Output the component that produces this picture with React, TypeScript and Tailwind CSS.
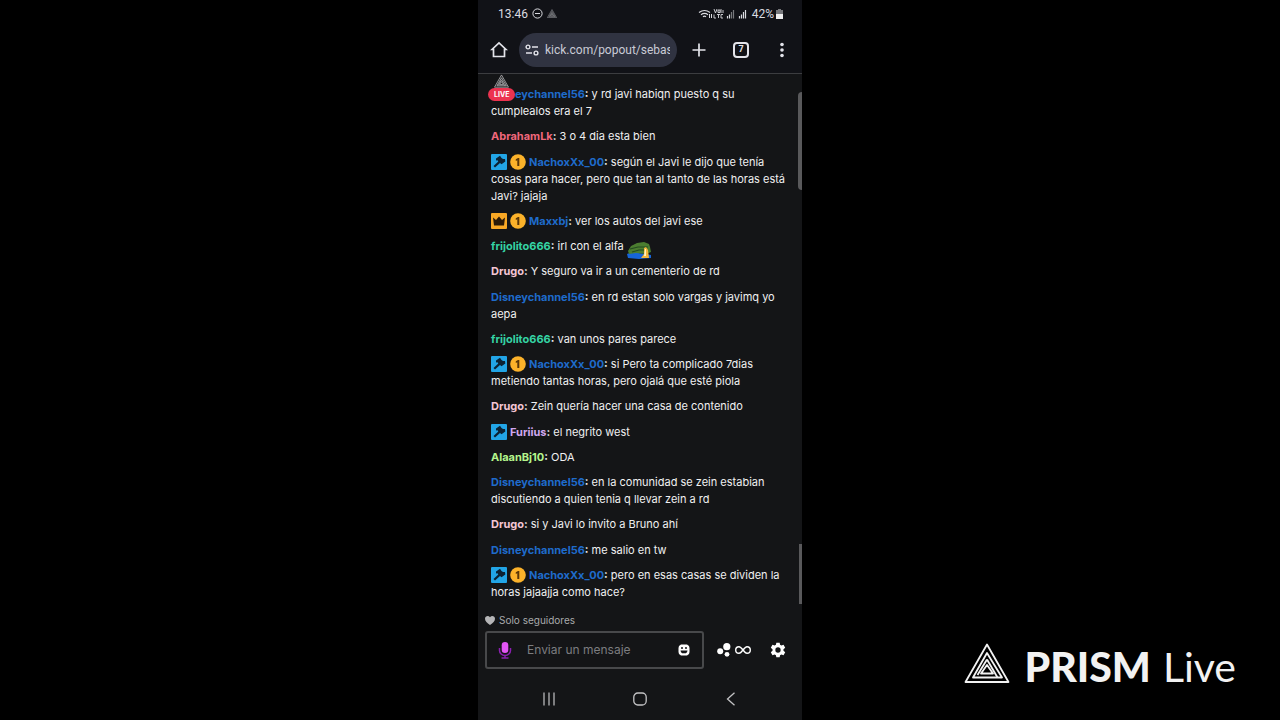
import type { ReactNode } from "react";

type Badge = "moderator" | "first" | "crown";

const colors = {
    blue: "text-[#1f6bcb]",
    coral: "text-[#f0687c]",
    teal: "text-[#35d3a4]",
    pink: "text-[#f5c6d4]",
    lilac: "text-[#d0a8f0]",
    lime: "text-[#b5f58c]",
};

const messages: { id: number; user: string; color: string; badges?: Badge[]; text: string; emote?: boolean }[] = [
    { id: 0, user: "Disneychannel56", color: colors.blue, text: "y rd javi habiqn puesto q su cumplealos era el 7" },
    { id: 1, user: "AbrahamLk", color: colors.coral, text: "3 o 4 dia esta bien" },
    { id: 2, user: "NachoxXx_00", color: colors.blue, badges: ["moderator", "first"], text: "según el Javi le dijo que tenía cosas para hacer, pero que tan al tanto de las horas está Javi? jajaja" },
    { id: 3, user: "Maxxbj", color: colors.blue, badges: ["crown", "first"], text: "ver los autos del javi ese" },
    { id: 4, user: "frijolito666", color: colors.teal, text: "irl con el alfa", emote: true },
    { id: 5, user: "Drugo", color: colors.pink, text: "Y seguro va ir a un cementerio de rd" },
    { id: 6, user: "Disneychannel56", color: colors.blue, text: "en rd estan solo vargas y javimq yo aepa" },
    { id: 7, user: "frijolito666", color: colors.teal, text: "van unos pares parece" },
    { id: 8, user: "NachoxXx_00", color: colors.blue, badges: ["moderator", "first"], text: "si Pero ta complicado 7dias metiendo tantas horas, pero ojalá que esté piola" },
    { id: 9, user: "Drugo", color: colors.pink, text: "Zein quería hacer una casa de contenido" },
    { id: 10, user: "Furiius", color: colors.lilac, badges: ["moderator"], text: "el negrito west" },
    { id: 11, user: "AlaanBj10", color: colors.lime, text: "ODA" },
    { id: 12, user: "Disneychannel56", color: colors.blue, text: "en la comunidad se zein estabian discutiendo a quien tenia q llevar zein a rd" },
    { id: 13, user: "Drugo", color: colors.pink, text: "si y Javi lo invito a Bruno ahí" },
    { id: 14, user: "Disneychannel56", color: colors.blue, text: "me salio en tw" },
    { id: 15, user: "NachoxXx_00", color: colors.blue, badges: ["moderator", "first"], text: "pero en esas casas se dividen la horas jajaajja como hace?" },
];

const PrismMark = ({ className, weight = 1.8 }: { className: string; weight?: number }) => (
    <svg viewBox="0 0 46 42" fill="none" stroke="currentColor" strokeWidth={weight} strokeLinejoin="round" className={className}>
        <path d="M23 2.500 44.500 40H1.500Z" />
        <path d="M23 11 38 35.500H9Z" />
        <path d="M23 17.500 33.500 35.500" />
        <path d="M23 17.500 13.500 33" />
        <path d="M23 23 29 31.500H17Z" />
    </svg>
);

const ChatBadge = ({ kind }: { kind: Badge }) => (
    <svg viewBox="0 0 16 16" className="-mt-0.5 mr-[3px] inline-block size-4 align-middle" aria-hidden="true">
        {kind === "moderator" && (
            <>
                <rect width="16" height="16" rx="1" fill="#22a5e6" />
                <path d="M5 4.500 9 1.800 10.500 4 12 5 14 5 14.300 7.500 10.500 10.300 9 9 4 13.500 2.500 12 7.300 7.500 6.500 6.300 5 6.500Z" fill="#0c2233" />
            </>
        )}
        {kind === "first" && (
            <>
                <circle cx="8" cy="8" r="7.800" fill="#fcb22a" />
                <path d="M8 4h1.300v8H7.300V6.300L5.800 7V5.300Z" fill="#5a3608" />
            </>
        )}
        {kind === "crown" && (
            <>
                <rect width="16" height="16" rx="1" fill="#f9a825" />
                <path d="M2 4.500 5 7 8 3.500 11 7 14 4.500 13 12.500H3Z" fill="#2b1a08" />
            </>
        )}
    </svg>
);

const CrocEmote = () => (
    <svg viewBox="0 0 25 20" className="-mt-0.5 -mb-2 inline-block h-5 w-[25px] align-middle" aria-hidden="true">
        <path d="M0 14 5 12 18 14 24 15V18L12 19 1 18Z" fill="#1765d8" />
        <path d="M1 11 4 6 10 3 17 2 22 4 23 7 24 12 19 14 9 13 2 14Z" fill="#4b7d30" />
        <path d="M3 9 11 7 21 7M5 12 12 10 20 10" stroke="#244a20" strokeWidth="1.200" fill="none" />
        <path d="M17 8 19 7 21 10 22 18H14L17 14Z" fill="#f4b63d" />
        <path d="M18 9 19 9 19 16 17 16Z" fill="#fff3bd" />
    </svg>
);

const StatusBar = () => (
    <div className="flex h-[27px] items-center justify-between pr-[19px] pl-5 font-[Roboto,sans-serif] text-[12px] text-[#dadbe0]">
        <div className="flex items-center gap-1">
            <span>13:46</span>
            <svg viewBox="0 0 11 11" fill="none" stroke="currentColor" className="size-[11px]">
                <circle cx="5.500" cy="5.500" r="4.600" />
                <path d="M3 5.500h5" />
            </svg>
            <PrismMark className="h-[9px] w-[10px] text-[#a5a6aa]" weight={2.4} />
        </div>
        <div className="flex items-center gap-[2px]">
            <svg viewBox="0 0 52 12" className="h-3 w-[52px]" fill="none" stroke="currentColor">
                <path d="M1 4.500Q6.500 .5 12 4.500M3 6.700Q6.500 4 10 6.700M5 8.700Q6.500 7.500 8 8.700" strokeWidth="1.200" />
                <path d="M11.500 6v4M13.500 6v4" />
                <path d="M16 1l1.500 4L19 1M20 2h2v2.500h-2ZM23 1v4M25 2v3M16 6.500V10h2M19 6.500h3M20.500 6.500V10M25 6.500h-2V10h2" strokeWidth=".9" />
                <path d="M29.500 8v2.500M31.500 6.500v4" strokeWidth="1.200" />
                <path d="M33.500 4v6.500M35.500 2v8.500" stroke="#77787c" strokeWidth="1.200" />
                <path d="M41.500 8v2.500M43.500 6.500v4M45.500 4v6.500" strokeWidth="1.200" />
                <path d="M47.500 2v8.500" strokeWidth="1.200" />
            </svg>
            <span>42%</span>
            <svg viewBox="0 0 7 10" className="h-[10px] w-[7px]">
                <path d="M2 0h3v1h2v9H0V1h2Z" fill="#77787c" />
                <path d="M0 5h7v5H0Z" fill="#eeeeef" />
            </svg>
        </div>
    </div>
);

const IconButton = ({ label, className = "", children }: { label: string; className?: string; children: ReactNode }) => (
    <button type="button" aria-label={label} className={`flex shrink-0 items-center justify-center ${className}`}>
        {children}
    </button>
);

const BrowserBar = () => (
    <div className="flex h-[46px] items-center px-3 text-[#e3e4ea]">
        <IconButton label="Inicio" className="mr-[11px]">
            <svg viewBox="0 0 18 18" className="size-[18px]" fill="none" stroke="currentColor" strokeWidth="1.700">
                <path d="M3.500 8.500H2L9 2l7 6.500H14.500V15.500H3.500Z" />
            </svg>
        </IconButton>
        <div className="flex h-[34px] min-w-0 flex-1 items-center gap-[6px] rounded-full bg-[#303341] pr-[7px] pl-[6px]">
            <svg viewBox="0 0 14 12" className="h-3 w-[14px] shrink-0" fill="none" stroke="currentColor" strokeWidth="1.400">
                <circle cx="3" cy="3" r="1.900" />
                <path d="M7 3h6M1 9h6" />
                <circle cx="11" cy="9" r="1.900" />
            </svg>
            <input
                aria-label="Dirección"
                readOnly
                value="kick.com/popout/sebas"
                className="min-w-0 flex-1 bg-transparent font-[Roboto,sans-serif] text-[12px] text-[#c9cbd6] outline-none"
            />
        </div>
        <IconButton label="Nueva pestaña" className="ml-[14px]">
            <svg viewBox="0 0 16 16" className="size-4" fill="none" stroke="currentColor" strokeWidth="1.700">
                <path d="M8 1.500v13M1.500 8h13" />
            </svg>
        </IconButton>
        <IconButton label="Pestañas" className="ml-[26px] size-4 rounded-[4px] border-2 border-[#e3e4ea] font-[Roboto,sans-serif] text-[9px] font-bold">
            7
        </IconButton>
        <IconButton label="Menú" className="ml-[25px] w-4">
            <svg viewBox="0 0 4 16" className="h-4 w-1" fill="currentColor">
                <circle cx="2" cy="2.500" r="1.800" />
                <circle cx="2" cy="8" r="1.800" />
                <circle cx="2" cy="13.500" r="1.800" />
            </svg>
        </IconButton>
    </div>
);

const LiveBadge = () => (
    <div className="absolute top-0 left-[10px] flex flex-col items-center">
        <PrismMark className="h-[14px] w-[15px] text-[#b9b9bb]" weight={2.4} />
        <span className="rounded-full bg-[#ec3350] px-[6px] text-[7px] leading-[13px] font-bold text-white">LIVE</span>
    </div>
);

const Chat = () => (
    <div className="relative flex min-h-0 flex-1 flex-col border-t border-[#3c3d40]">
        <ul className="flex flex-1 flex-col justify-between pt-3 pr-3 pb-[3px] pl-[13px] text-[11px] leading-[17px] text-[#f0f0f1]">
            {messages.map((message) => (
                <li key={message.id}>
                    {message.badges?.map((badge) => <ChatBadge key={badge} kind={badge} />)}
                    <span className={`font-bold ${message.color}`}>{message.user}</span>
                    <span className="font-bold">:</span> {message.text} {message.emote && <CrocEmote />}
                </li>
            ))}
        </ul>
        <LiveBadge />
        <div className="absolute top-[18px] right-0 h-[98px] w-1 rounded-l-full bg-[#59595b]" />
        <div className="absolute right-0 bottom-0 h-[60px] w-[3px] bg-[#59595b]" />
    </div>
);

const Composer = () => (
    <div className="pr-4 pl-[7px]">
        <p className="flex h-[27px] items-center gap-1 pt-[6px] text-[10px] text-[#a9aaac]">
            <svg viewBox="0 0 10 9" className="h-[9px] w-[10px]" fill="#b5b5b7">
                <path d="M5 9C2 7 0 5.200 0 2.800 0 0 3.500-.8 5 1.300 6.500-.8 10 0 10 2.800 10 5.200 8 7 5 9Z" />
            </svg>
            Solo seguidores
        </p>
        <div className="flex items-center">
            <div className="flex h-[38px] min-w-0 flex-1 items-center rounded-[3px] border-2 border-[#48494b] pr-3 pl-[11px]">
                <svg viewBox="0 0 14 18" className="mr-[15px] h-[18px] w-[14px] shrink-0">
                    <path d="M1.500 7v2.500a5.500 5 0 0 0 11 0V7M7 14.500V17M3.500 17h7" fill="none" stroke="#8a1fb0" strokeWidth="1.500" />
                    <rect x="3.700" y="1" width="6.600" height="11" rx="3.300" fill="#e356f5" />
                </svg>
                <input
                    aria-label="Mensaje"
                    placeholder="Enviar un mensaje"
                    className="min-w-0 flex-1 bg-transparent text-[12px] outline-none placeholder:text-[#7c7d80]"
                />
                <IconButton label="Emotes">
                    <svg viewBox="0 0 12 12" className="size-3">
                        <path d="M3 .5h6L11 2l.5 2v4L11 10 9 11.500H3L1 10 .5 8V4L1 2Z" fill="#fff" />
                        <path d="M3 3.200h2v1.600H3ZM7 3.200h2v1.600H7ZM2.500 6.500h7L9 8.200 7.800 9.300H4.200L3 8.200Z" fill="#151618" />
                    </svg>
                </IconButton>
            </div>
            <IconButton label="Puntos" className="ml-[13px] gap-1 text-white">
                <svg viewBox="0 0 14 14" className="size-[14px]" fill="currentColor">
                    <circle cx="3.200" cy="8.300" r="3" />
                    <circle cx="9.800" cy="3.700" r="3.600" />
                    <circle cx="10" cy="11.300" r="2.400" />
                </svg>
                <svg viewBox="0 0 16 10" className="h-[10px] w-4" fill="none" stroke="currentColor" strokeWidth="1.400">
                    <path d="M6.800 6.500C5.800 7.800 5 8.300 4 8.300a3.300 3.300 0 0 1 0-6.600C5.500 1.700 6.500 3 8 5s2.500 3.300 4 3.300a3.300 3.300 0 0 0 0-6.600C11 1.700 10.200 2.200 9.200 3.500Z" stroke="none" />
                    <path d="M8 5C6.500 3 5.500 1.700 4 1.700a3.300 3.300 0 0 0 0 6.600C5.500 8.300 6.500 7 8 5s2.500-3.300 4-3.300a3.300 3.300 0 0 1 0 6.600C10.500 8.300 9.500 7 8 5Z" />
                </svg>
            </IconButton>
            <IconButton label="Ajustes" className="ml-[19px] text-white">
                <svg viewBox="0 0 24 24" className="size-4" fill="currentColor" fillRule="evenodd">
                    <path d="M9.500 1h5l.6 3.300 2 1.100 3.200-1.200 2.500 4.300-2.600 2.200v2.600l2.600 2.200-2.500 4.300-3.200-1.200-2 1.100-.6 3.300h-5l-.6-3.300-2-1.100-3.200 1.200-2.500-4.300 2.600-2.200v-2.600L1.200 8.500l2.500-4.300 3.200 1.200 2-1.100ZM12 8a4 4 0 1 0 0 8 4 4 0 0 0 0-8Z" />
                </svg>
            </IconButton>
        </div>
    </div>
);

const NavigationBar = () => (
    <nav className="flex h-[51px] items-center justify-between px-16 pt-[9px] text-[#c3c3c5]">
        <IconButton label="Recientes">
            <svg viewBox="0 0 14 14" className="size-[14px]" fill="none" stroke="currentColor" strokeWidth="1.200">
                <path d="M2 .5v13M7 .5v13M12 .5v13" />
            </svg>
        </IconButton>
        <IconButton label="Principal">
            <svg viewBox="0 0 14 14" className="size-[14px]" fill="none" stroke="currentColor" strokeWidth="1.300">
                <rect x=".8" y="1" width="12.400" height="12" rx="4" />
            </svg>
        </IconButton>
        <IconButton label="Atrás">
            <svg viewBox="0 0 14 14" className="size-[14px]" fill="none" stroke="currentColor" strokeWidth="1.300">
                <path d="M10.500 .8 3.500 7l7 6.200" />
            </svg>
        </IconButton>
    </nav>
);

const App = () => {
    return (
        <main className="grid h-screen grid-cols-[1fr_auto_1fr] overflow-hidden bg-black font-[Inter,sans-serif]">
            <section className="col-start-2 flex h-screen w-[45vh] flex-col bg-[#141517]">
                <header className="bg-[#111217]">
                    <StatusBar />
                    <BrowserBar />
                </header>
                <Chat />
                <Composer />
                <NavigationBar />
            </section>
            <footer className="flex items-start gap-[15px] self-end justify-self-end pr-11 pb-7 text-[#f2f2f2]">
                <PrismMark className="h-[42px] w-[46px]" />
                <p className="flex gap-3 font-[Lato,sans-serif] text-[41px] leading-[50px]">
                    <strong className="font-black">PRISM</strong>
                    <span>Live</span>
                </p>
            </footer>
        </main>
    );
};

export default App;
